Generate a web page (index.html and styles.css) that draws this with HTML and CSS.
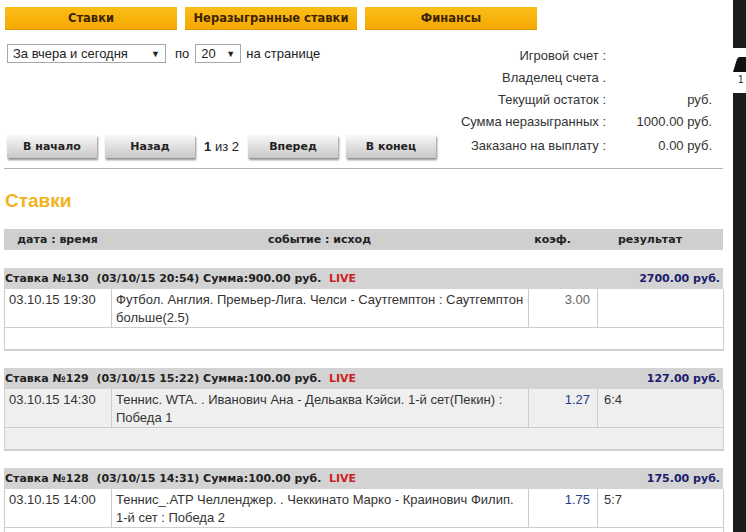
FILE: index.html
```html
<!DOCTYPE html>
<html lang="ru">
<head>
    <meta charset="UTF-8">
    <title>Ставки</title>
    <link rel="stylesheet" href="styles.css">
</head>
<body>
<div class="page">
    <div class="main">
        <div class="tabs">
            <a class="tab">Ставки</a>
            <a class="tab">Неразыгранные ставки</a>
            <a class="tab">Финансы</a>
        </div>

        <div class="top">
            <div class="controls">
                <div class="filter">
                    <div class="select period"><span>За вчера и сегодня</span><span class="arrow">&#9660;</span></div>
                    <span>по</span>
                    <div class="select count"><span>20</span><span class="arrow">&#9660;</span></div>
                    <span>на странице</span>
                </div>
                <div class="pager">
                    <a class="btn">В начало</a>
                    <a class="btn">Назад</a>
                    <span class="pages"><b>1</b> из 2</span>
                    <a class="btn">Вперед</a>
                    <a class="btn">В конец</a>
                </div>
            </div>
            <table class="account">
                <tr><td class="lbl">Игровой счет :</td><td class="val"></td></tr>
                <tr><td class="lbl">Владелец счета .</td><td class="val"></td></tr>
                <tr><td class="lbl">Текущий остаток :</td><td class="val">руб.</td></tr>
                <tr><td class="lbl">Сумма неразыгранных :</td><td class="val">1000.00 руб.</td></tr>
                <tr class="last"><td class="lbl">Заказано на выплату :</td><td class="val">0.00 руб.</td></tr>
            </table>
        </div>

        <div class="sep"></div>

        <h2 class="title">Ставки</h2>

        <table class="grid head">
            <colgroup><col class="c1"><col class="c2"><col class="c3"><col class="c4"></colgroup>
            <tr>
                <th>дата : время</th>
                <th>событие : исход</th>
                <th class="h-k">коэф.</th>
                <th class="h-r">результат</th>
            </tr>
        </table>

        <div class="bet">
            <div class="bet-head">
                <span>Ставка №130&nbsp; (03/10/15 20:54) Сумма:900.00 руб.&nbsp; <span class="live">LIVE</span></span>
                <span class="win">2700.00 руб.</span>
            </div>
            <table class="grid rows">
                <colgroup><col class="c1"><col class="c2"><col class="c3"><col class="c4"></colgroup>
                <tr>
                    <td>03.10.15 19:30</td>
                    <td>Футбол. Англия. Премьер-Лига. Челси - Саутгемптон : Саутгемптон больше(2.5)</td>
                    <td class="k grey">3.00</td>
                    <td class="res"></td>
                </tr>
                <tr class="foot"><td colspan="4"></td></tr>
            </table>
        </div>

        <div class="bet alt">
            <div class="bet-head">
                <span>Ставка №129&nbsp; (03/10/15 15:22) Сумма:100.00 руб.&nbsp; <span class="live">LIVE</span></span>
                <span class="win">127.00 руб.</span>
            </div>
            <table class="grid rows">
                <colgroup><col class="c1"><col class="c2"><col class="c3"><col class="c4"></colgroup>
                <tr>
                    <td>03.10.15 14:30</td>
                    <td>Теннис. WTA. . Иванович Ана - Дельаква Кэйси. 1-й сет(Пекин) : Победа 1</td>
                    <td class="k">1.27</td>
                    <td class="res">6:4</td>
                </tr>
                <tr class="foot"><td colspan="4"></td></tr>
            </table>
        </div>

        <div class="bet">
            <div class="bet-head">
                <span>Ставка №128&nbsp; (03/10/15 14:31) Сумма:100.00 руб.&nbsp; <span class="live">LIVE</span></span>
                <span class="win">175.00 руб.</span>
            </div>
            <table class="grid rows">
                <colgroup><col class="c1"><col class="c2"><col class="c3"><col class="c4"></colgroup>
                <tr>
                    <td>03.10.15 14:00</td>
                    <td>Теннис_.ATP Челленджер. . Чеккинато Марко - Краинович Филип. 1-й сет : Победа 2</td>
                    <td class="k">1.75</td>
                    <td class="res">5:7</td>
                </tr>
                <tr class="foot"><td colspan="4"></td></tr>
            </table>
        </div>
    </div>

    <div class="strip">
        <div class="dark top-part"></div>
        <div class="gap">
            <svg width="13" height="16" viewBox="0 0 13 16"><polygon points="0,15 4,2 6,0 13,0 13,15" fill="#111"/></svg>
            <span class="num">1</span>
        </div>
        <div class="dark rest"></div>
    </div>
</div>
</body>
</html>
```

FILE: styles.css
```css
body {
    margin: 0;
    font-family: "Liberation Sans", Arial, sans-serif;
    font-size: 13px;
    color: #222;
    background-color: #fff;
}
.page {
    display: flex;
    min-height: 532px;
}
.main {
    width: 719px;
    padding: 7px 10px 0 4px;
}

/* вкладки */
.tabs {
    display: flex;
    gap: 8px;
    margin: 0 0 14px 1px;
}
.tab {
    width: 172px;
    height: 23px;
    box-sizing: border-box;
    line-height: 22px;
    text-align: center;
    background: linear-gradient(#fbbe1a, #f5a900);
    border-bottom: 1px solid #d8960a;
    font-family: "DejaVu Sans", sans-serif;
    font-weight: bold;
    font-size: 11.5px;
    color: #3c2400;
}

/* фильтр, пагинация, счет */
.top {
    display: flex;
    justify-content: space-between;
    height: 114px;
}
.controls {
    display: flex;
    flex-direction: column;
    justify-content: space-between;
    padding-left: 3px;
}
.filter {
    display: flex;
    align-items: center;
}
.select {
    height: 19px;
    box-sizing: border-box;
    border: 1px solid #a8a8a8;
    display: flex;
    align-items: center;
    justify-content: space-between;
    padding: 0 5px;
}
.select .arrow {
    font-size: 9px;
}
.period {
    width: 159px;
    margin-right: 9px;
}
.count {
    width: 46px;
    margin: 0 5px 0 6px;
}
.pager {
    display: flex;
    align-items: center;
    gap: 8px;
}
.btn {
    width: 90px;
    height: 23px;
    line-height: 23px;
    text-align: center;
    background: linear-gradient(#f8f8f8, #c8c8c8);
    box-shadow: 1px 2px 2px rgba(0, 0, 0, 0.45);
    font-family: "DejaVu Sans", sans-serif;
    font-weight: bold;
    font-size: 11px;
    color: #222;
}
.pages {
    width: 37px;
    text-align: center;
    white-space: nowrap;
}
.account {
    border-collapse: collapse;
    margin-right: 11px;
    align-self: flex-start;
    color: #333;
}
.account td {
    height: 22px;
    padding: 0;
}
.account .last td {
    height: 26px;
}
.account .lbl {
    text-align: right;
}
.account .val {
    width: 106px;
    text-align: right;
}

.sep {
    margin-top: 10px;
    border-top: 1px solid #b2b2b2;
}
.title {
    margin: 20px 0 17px 1px;
    font-family: "Liberation Sans", Arial, sans-serif;
    font-size: 19px;
    line-height: 23px;
    color: #f0b31b;
}

/* таблица ставок */
.grid {
    width: 719px;
    table-layout: fixed;
    border-collapse: collapse;
}
.c1 { width: 107px; }
.c2 { width: 417px; }
.c3 { width: 69px; }
.c4 { width: 126px; }
.head {
    background-color: #cfcfcf;
}
.head th {
    height: 21px;
    padding: 0;
    font-family: "DejaVu Sans", sans-serif;
    font-size: 11px;
    color: #222;
}
.head .h-k,
.head .h-r {
    padding-right: 20px;
}
.bet {
    margin-top: 18px;
}
.bet + .bet {
    margin-top: 17px;
}
.bet-head {
    height: 21px;
    line-height: 21px;
    display: flex;
    justify-content: space-between;
    padding: 0 3px 0 1px;
    background-color: #d3d3d3;
    font-family: "DejaVu Sans", sans-serif;
    font-weight: bold;
    font-size: 11px;
    color: #222;
    white-space: nowrap;
}
.live {
    color: #cc2020;
}
.win {
    color: #1c1c6e;
}
.rows {
    border: 1px solid #cdcdcd;
    border-top: none;
    border-bottom: 2px solid #cfcfcf;
}
.rows td {
    height: 36px;
    padding: 2px 4px 0;
    vertical-align: top;
    line-height: 18px;
    border-right: 1px solid #cdcdcd;
    color: #333;
}
.rows .k {
    text-align: right;
    padding-right: 7px;
    color: #243c8c;
}
.rows .k.grey {
    color: #666;
}
.rows .res {
    padding-left: 6px;
}
.rows .foot td {
    height: 21px;
    padding: 0;
    border-top: 1px solid #cdcdcd;
}
.alt .rows {
    background-color: #efefef;
}

/* край соседнего окна справа */
.strip {
    width: 13px;
    display: flex;
    flex-direction: column;
}
.dark {
    background-color: #1d1d1d;
}
.top-part {
    height: 48px;
}
.gap {
    height: 45px;
    padding-top: 9px;
    box-sizing: border-box;
}
.gap svg {
    display: block;
}
.num {
    display: block;
    padding-left: 5px;
    font-size: 10px;
    line-height: 14px;
}
.rest {
    flex: 1;
}
```
